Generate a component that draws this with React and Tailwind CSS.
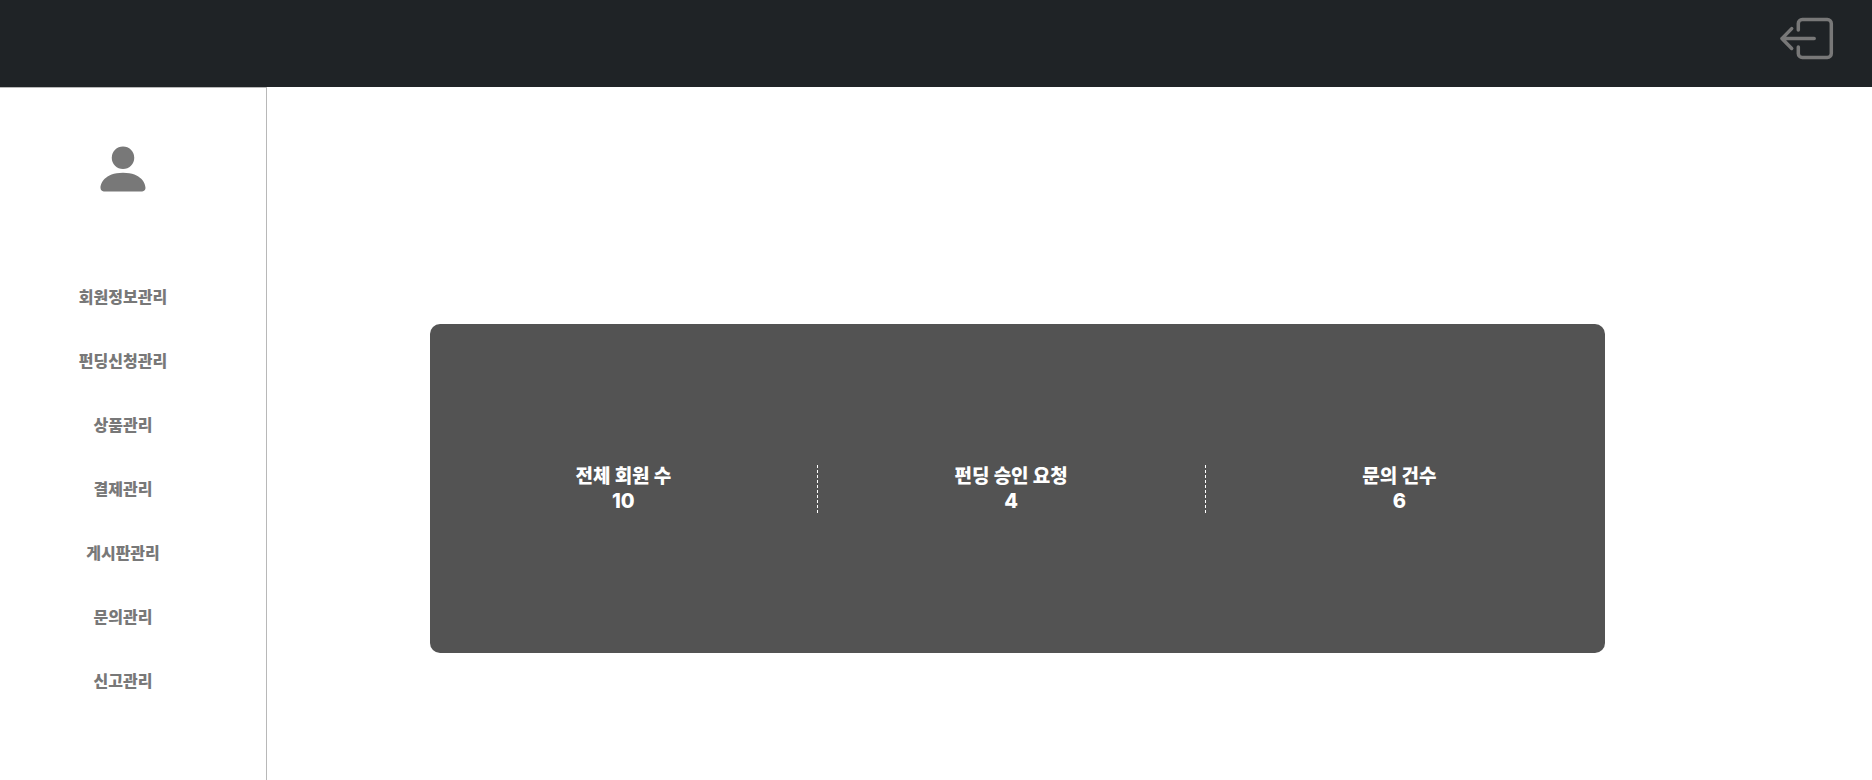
import { BsPersonFill } from "react-icons/bs";

const menu = [
  "회원정보관리",
  "펀딩신청관리",
  "상품관리",
  "결제관리",
  "게시판관리",
  "문의관리",
  "신고관리",
];

const stats = [
  { label: "전체 회원 수", value: 10 },
  { label: "펀딩 승인 요청", value: 4 },
  { label: "문의 건수", value: 6 },
];

function LogoutIcon() {
  return (
    <svg
      viewBox="0 0 60 60"
      className="size-[60px]"
      fill="none"
      stroke="currentColor"
      strokeWidth="3.5"
      strokeLinecap="round"
      strokeLinejoin="round"
      aria-hidden="true"
    >
      <path d="M21.3 21V14.6a4 4 0 0 1 4-4h25a4 4 0 0 1 4 4v29.8a4 4 0 0 1-4 4h-25a4 4 0 0 1-4-4v-6.4" />
      <path d="M37.2 29.6H4.9M14.7 19.6 4.9 29.6 14.7 39.4" />
    </svg>
  );
}

export default function App() {
  return (
    <div className="flex min-h-screen flex-col bg-white font-[Inter,'Noto_Sans_CJK_KR',sans-serif] font-extrabold">
      <header className="flex h-[87px] items-start justify-end bg-[#1f2326] pt-[9px] pr-[35px]">
        <button type="button" aria-label="로그아웃" className="text-[#787878]">
          <LogoutIcon />
        </button>
      </header>
      <div className="flex grow">
        <aside className="flex w-[267px] shrink-0 flex-col items-center border-t border-r border-[#b8b8b8] pt-[51px] pr-5 text-[#787878]">
          <BsPersonFill className="size-[60px]" aria-hidden="true" />
          <nav className="mt-[86px]">
            <ul className="flex flex-col items-center gap-10">
              {menu.map((item) => (
                <li key={item}>
                  <a href="#" className="block text-base">
                    {item}
                  </a>
                </li>
              ))}
            </ul>
          </nav>
        </aside>
        <main className="grow pt-[237px] pr-[267px] pb-10 pl-[163px]">
          <dl className="flex h-[329px] items-center rounded-[10px] bg-[#535353] text-center text-white">
            {stats.map((stat) => (
              <div
                key={stat.label}
                className="w-[33%] border-r border-dashed border-white leading-6 last:border-r-0"
              >
                <dt className="text-[19px] leading-6">{stat.label}</dt>
                <dd className="text-[20px] leading-6">{stat.value}</dd>
              </div>
            ))}
          </dl>
        </main>
      </div>
    </div>
  );
}
